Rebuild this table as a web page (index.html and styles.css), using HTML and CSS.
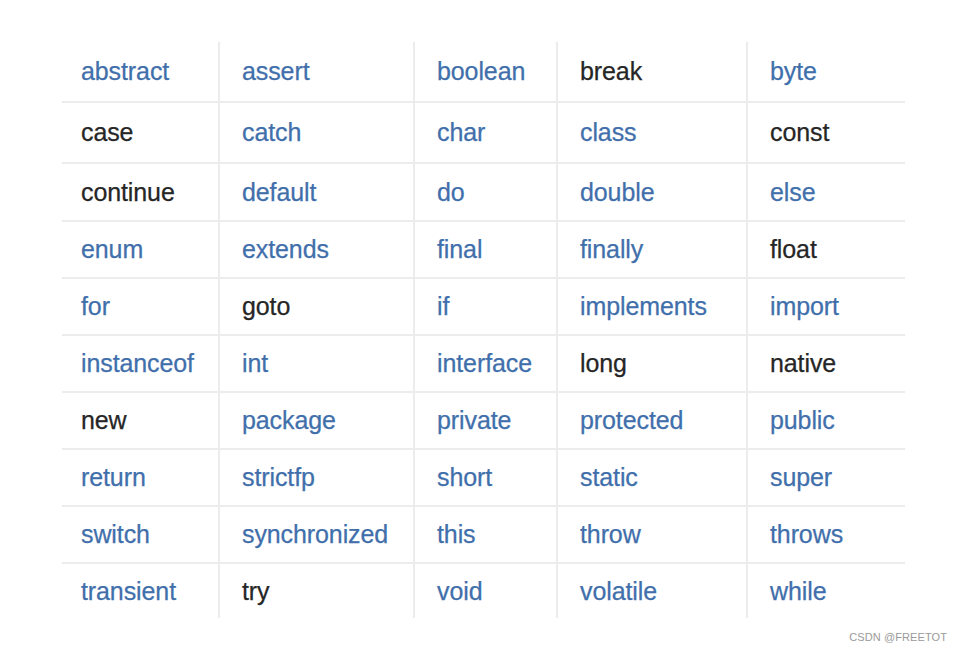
FILE: index.html
```html
<!DOCTYPE html>
<html>
<head>
<meta charset="utf-8">
<link rel="stylesheet" href="styles.css">
</head>
<body>
<div class="page">
  <div class="kw-table">
    <div class="c b">abstract</div><div class="c b">assert</div><div class="c b">boolean</div><div class="c k">break</div><div class="c b">byte</div>
    <div class="c k">case</div><div class="c b">catch</div><div class="c b">char</div><div class="c b">class</div><div class="c k">const</div>
    <div class="c k">continue</div><div class="c b">default</div><div class="c b">do</div><div class="c b">double</div><div class="c b">else</div>
    <div class="c b">enum</div><div class="c b">extends</div><div class="c b">final</div><div class="c b">finally</div><div class="c k">float</div>
    <div class="c b">for</div><div class="c k">goto</div><div class="c b">if</div><div class="c b">implements</div><div class="c b">import</div>
    <div class="c b">instanceof</div><div class="c b">int</div><div class="c b">interface</div><div class="c k">long</div><div class="c k">native</div>
    <div class="c k">new</div><div class="c b">package</div><div class="c b">private</div><div class="c b">protected</div><div class="c b">public</div>
    <div class="c b">return</div><div class="c b">strictfp</div><div class="c b">short</div><div class="c b">static</div><div class="c b">super</div>
    <div class="c b">switch</div><div class="c b">synchronized</div><div class="c b">this</div><div class="c b">throw</div><div class="c b">throws</div>
    <div class="c b last">transient</div><div class="c k last">try</div><div class="c b last">void</div><div class="c b last">volatile</div><div class="c b last">while</div>
  </div>
  <div class="watermark">CSDN @FREETOT</div>
</div>
</body>
</html>
```
FILE: styles.css
```css
html, body {
  margin: 0;
  padding: 0;
  background: #ffffff;
}
.page {
  position: relative;
  width: 964px;
  height: 651px;
  padding: 42px 0 0 62px;
  box-sizing: border-box;
  font-family: "Liberation Sans", Arial, sans-serif;
}
.kw-table {
  display: grid;
  grid-template-columns: 156px 195px 143px 190px 159px;
  grid-template-rows: 61px 61px 58px 57px 57px 57px 57px 57px 57px 54px;
}
.c {
  display: flex;
  align-items: center;
  font-size: 25px;
  padding-left: 22px;
  border-bottom: 2px solid #ececec;
  border-left: 2px solid #ececec;
  box-sizing: border-box;
  letter-spacing: -0.1px;
  -webkit-text-stroke: 0.25px currentColor;
}
.c:nth-child(5n+1) {
  border-left: none;
  padding-left: 19px;
}
.c.last {
  border-bottom: none;
}
.b { color: #416fab; }
.k { color: #262626; }
.watermark {
  position: absolute;
  right: 17px;
  bottom: 8px;
  font-size: 11px;
  letter-spacing: 0.1px;
  color: #9a9a9a;
  font-family: "Liberation Sans", Arial, sans-serif;
}
```
